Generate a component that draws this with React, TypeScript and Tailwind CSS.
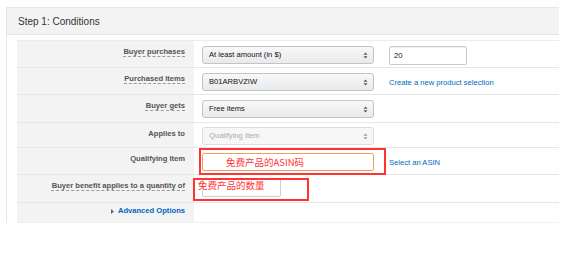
import type { ReactNode } from "react";

/* Promotion "Step 1: Conditions" form, with the red annotation boxes
   that were drawn over the screenshot. */

function Arrows({ muted = false }: { muted?: boolean }) {
  return (
    <svg width="5" height="7" viewBox="0 0 5 7" className={muted ? "text-[#999]" : "text-[#555]"}>
      <path d="M2.5 0.5 L4.5 2.8 H0.5 Z M2.5 6.5 L4.5 4.2 H0.5 Z" fill="currentColor" />
    </svg>
  );
}

function Select({ value, disabled = false }: { value: string; disabled?: boolean }) {
  return (
    <div
      className={
        disabled
          ? "flex h-[18px] w-[172px] items-center justify-between rounded-[3px] border border-[#dcdcdc] bg-[#f7f7f7] pl-[6px] pr-[5px] text-[7.6px] text-[#aaa]"
          : "flex h-[18px] w-[172px] items-center justify-between rounded-[3px] border border-[#c4c4c4] bg-gradient-to-b from-[#f8f8f9] to-[#e9eaec] pl-[6px] pr-[5px] text-[7.6px] text-[#111]"
      }
    >
      <span>{value}</span>
      <Arrows muted={disabled} />
    </div>
  );
}

function Label({ children, dotted = false }: { children: ReactNode; dotted?: boolean }) {
  return (
    <span
      className={
        dotted
          ? "text-[7.6px] font-bold text-[#555] underline decoration-[#999] decoration-dashed underline-offset-[2px]"
          : "text-[7.6px] font-bold text-[#555]"
      }
    >
      {children}
    </span>
  );
}

function Row({
  h,
  label,
  children,
  labelPt = "pt-[6px]",
  last = false,
}: {
  h: string;
  label: ReactNode;
  children?: ReactNode;
  labelPt?: string;
  last?: boolean;
}) {
  return (
    <div
      className={`grid grid-cols-[177px_1fr] ${h} ${
        last ? "border-b border-[#f1f1f1]" : "border-b border-[#e6e6e6]"
      }`}
    >
      <div className={`flex items-start justify-end bg-[#f3f3f3] pr-[9px] leading-[10px] ${labelPt}`}>
        {label}
      </div>
      <div className="relative flex items-start gap-[15px] pl-[8px] pt-[5px]">{children}</div>
    </div>
  );
}

export default function App() {
  return (
    <div className="h-[271px] w-[580px] bg-white font-['Liberation_Sans',Arial,'Noto_Sans_CJK_SC',sans-serif]">
      <div className="pl-[6px] pt-[7px]">
        <div className="w-[553px] border-l border-t border-[#e6e6e6]">
          <div className="flex h-[27px] items-center border-b border-[#e2e2e2] bg-[#f3f3f3] pl-[11px] text-[10px] text-[#333]">
            Step 1: Conditions
          </div>
          <div className="pl-[10px] pt-[5px]">
            <div className="border-t border-[#ececec]">
              <Row h="h-[27px]" label={<Label dotted>Buyer purchases</Label>}>
                <Select value="At least amount (in $)" />
                <div className="flex h-[19px] w-[78px] items-center rounded-[2px] border border-[#c9c9c9] pl-[4px] text-[7.6px] text-[#111] shadow-[inset_0_1px_1px_rgba(0,0,0,0.06)]">
                  20
                </div>
              </Row>
              <Row h="h-[27px]" label={<Label dotted>Purchased Items</Label>}>
                <Select value="B01ARBVZIW" />
                <span className="pt-[4px] text-[7.6px] text-[#0066c0]">Create a new product selection</span>
              </Row>
              <Row h="h-[28px]" label={<Label dotted>Buyer gets</Label>}>
                <Select value="Free items" />
              </Row>
              <Row h="h-[25px]" label={<Label>Applies to</Label>}>
                <div className="-mt-[1px]">
                  <Select value="Qualifying Item" disabled />
                </div>
              </Row>
              <Row h="h-[27px]" label={<Label>Qualifying Item</Label>}>
                <div className="flex h-[18px] w-[172px] items-center rounded-[2px] border border-[#e8a25c] pl-[23px] font-['Noto_Sans_CJK_SC',sans-serif] text-[9.5px] text-[#f33]">
                  免费产品的ASIN码
                </div>
                <span className="pt-[4px] text-[7.6px] text-[#0066c0]">Select an ASIN</span>
                <div className="absolute left-[5px] top-0 h-[27px] w-[187px] border-2 border-[#f33]" />
              </Row>
              <Row h="h-[28px]" label={<Label dotted>Buyer benefit applies to a quantity of</Label>}>
                <div className="-mt-[1px] h-[18px] w-[79px] rounded-[2px] border border-[#cfcfcf]" />
                <span className="absolute left-[4px] top-[3px] font-['Noto_Sans_CJK_SC',sans-serif] text-[9.5px] leading-[14px] text-[#f33]">
                  免费产品的数量
                </span>
                <div className="absolute -left-px top-[3px] h-[23px] w-[116px] border-2 border-[#f33]" />
              </Row>
              <Row
                h="h-[20px]"
                labelPt="pt-[3px]"
                last
                label={
                  <span className="flex items-center gap-[4px] text-[7.6px] font-bold text-[#0066c0]">
                    <svg width="3" height="5" viewBox="0 0 3 5">
                      <path d="M0 0 L3 2.5 L0 5 Z" fill="#666" />
                    </svg>
                    Advanced Options
                  </span>
                }
              />
            </div>
          </div>
        </div>
      </div>
    </div>
  );
}
